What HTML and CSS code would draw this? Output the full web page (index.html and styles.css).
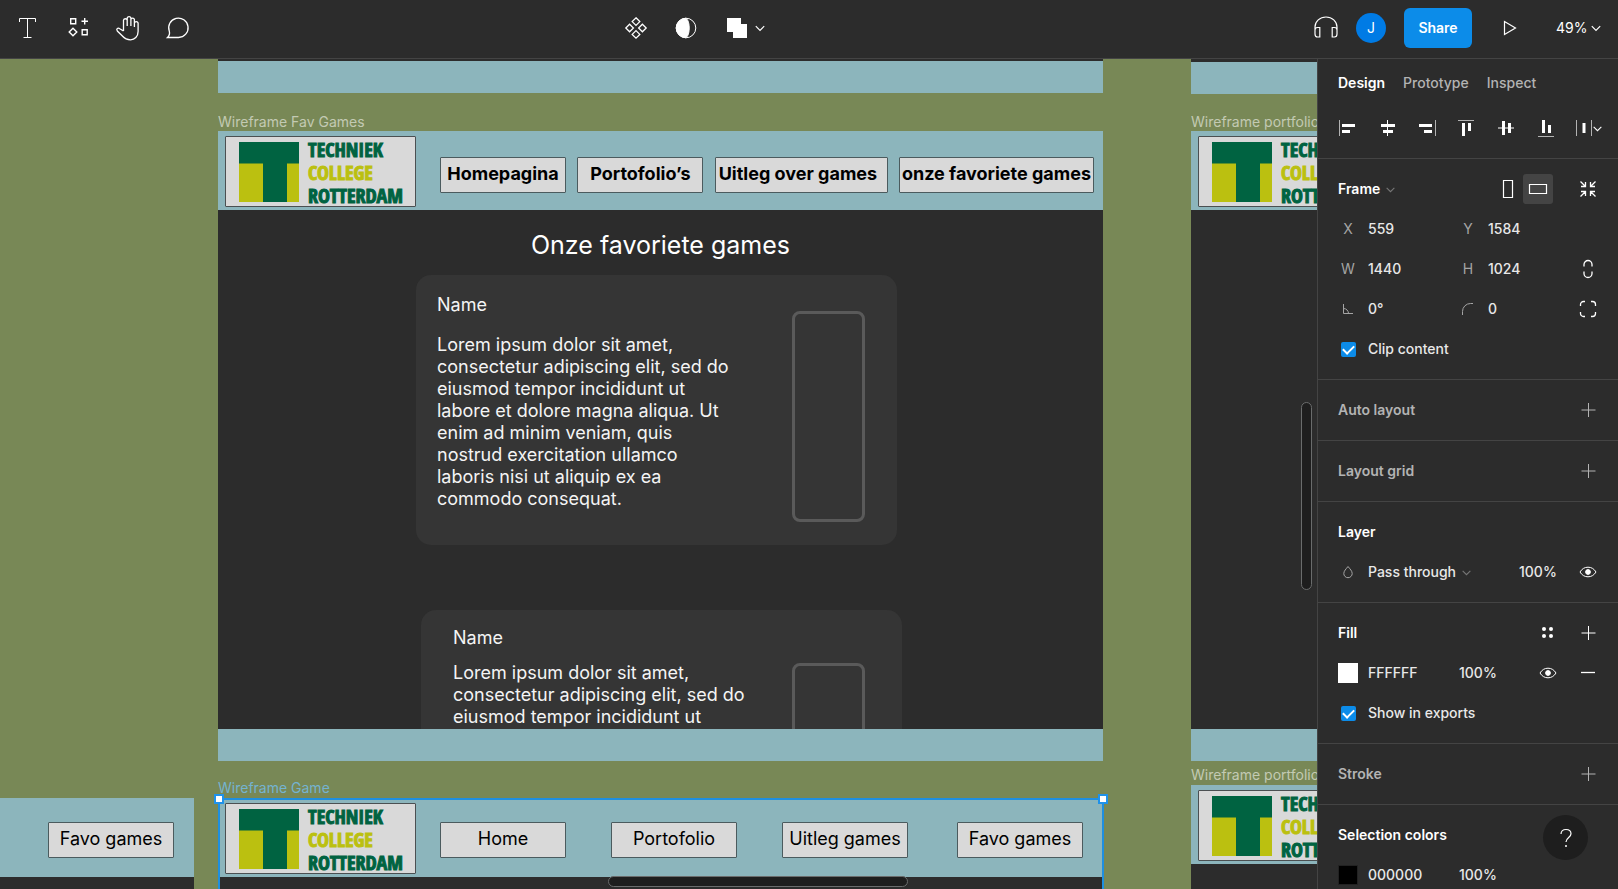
FILE: index.html
```html
<!DOCTYPE html>
<html lang="en">
<head>
<meta charset="utf-8">
<title>Wireframes</title>
<link rel="stylesheet" href="styles.css">
</head>
<body>
<svg class="defs" aria-hidden="true">
  <symbol id="chev" viewBox="0 0 10 10"><path d="M1.5 3.5 5 7l3.500-3.500"/></symbol>
  <symbol id="plus" viewBox="0 0 16 16"><path d="M8.500 1v14M1.500 8h14"/></symbol>
  <symbol id="eye" viewBox="0 0 18 12"><path d="M1 6C3 2.700 5.700 1.200 9 1.200S15 2.700 17 6c-2 3.300-4.700 4.800-8 4.800S3 9.300 1 6Z"/><circle class="solid" cx="9" cy="6" r="2.400"/></symbol>
  <symbol id="tcr" viewBox="0 0 60 60"><path fill="#bbc010" d="M0 21h60v39H0z"/><path fill="#006341" d="M0 0h60v21.500H48V60H24V21.500H0z"/></symbol>
</svg>
<header class="toolbar">
  <div class="tools">
    <button class="tool" aria-label="Text"><svg width="24" height="24"><path d="M3.500 6V2.500h16V6M11.500 2.500v19M7.500 21.500h8"/></svg></button>
    <button class="tool" aria-label="Resources"><svg width="24" height="24"><path stroke-width="1.400" d="M4.700 2.700h5v5h-5zM16.200 13.700h5v5h-5zM7 12.200l3.800 3.800L7 19.800 3.200 16zM18.700 2v6.500M15.500 5.200H22"/></svg></button>
    <button class="tool" aria-label="Hand"><svg width="26" height="28"><path stroke-width="1.300" d="M8.500 17V6.200a1.900 1.900 0 0 1 3.700 0V12M12.200 12V4a1.900 1.900 0 0 1 3.700 0v8M15.900 12V5.500a1.800 1.800 0 0 1 3.500 0V13M19.400 10V9a1.900 1.900 0 0 1 3.700 0v8.500c0 5-3.500 8.300-7.500 8.300-3.500 0-5.800-1-8.200-3.800L2.300 17c-1.500-2.200.7-3.700 2.500-2.300L8.500 17"/></svg></button>
    <button class="tool" aria-label="Comment"><svg width="26" height="26"><path stroke-width="1.300" d="M2.500 22.500h11a9.700 9.700 0 1 0-9.200-6.300c.6 2.300.2 4.500-1.800 6.300Z"/></svg></button>
  </div>
  <div class="tools">
    <button class="tool" aria-label="Create component"><svg width="24" height="24"><path stroke-width="1.300" d="m12 1.800 3.800 3.800L12 9.400 8.200 5.600zM12 14.600l3.800 3.800-3.800 3.800-3.800-3.800zM5.600 8.200 9.400 12l-3.800 3.800L1.800 12zM18.400 8.200l3.800 3.800-3.800 3.800-3.800-3.800z"/></svg></button>
    <button class="tool" aria-label="Use as mask"><svg width="24" height="24"><circle cx="12" cy="12" r="9.800"/><path class="solid" d="M12 2.200a9.800 9.800 0 0 0 0 19.600C14.800 19.500 15.200 15 15.200 12S14.800 4.500 12 2.200Z"/></svg></button>
    <button class="tool wide" aria-label="Boolean groups"><svg width="22" height="22"><path class="solid" stroke="none" d="M1 1h14v6h6v14H7v-6H1z"/></svg><svg width="12" height="12"><use href="#chev"/></svg></button>
  </div>
  <div class="account">
    <button class="plain" aria-label="Audio"><svg width="26" height="26"><path stroke-width="1.200" d="M2 15v-3a11 10 0 0 1 22 0v3M2 18v-3c0-2 1.200-2.500 2.500-2.500h2.300v9.500H4.500C3 22 2 21 2 19zM24 18v-3c0-2-1.200-2.500-2.500-2.500h-2.300v9.500h2.300c1.500 0 2.500-1 2.500-3z"/></svg></button>
    <button class="avatar">J</button>
    <button class="share">Share</button>
    <button class="plain play" aria-label="Present"><svg width="16" height="16"><path stroke-width="1.200" d="M2.500 1.500v13L13.500 8z"/></svg></button>
    <label class="drop zoom"><select aria-label="Zoom"><option>49%</option></select><svg width="12" height="12"><use href="#chev"/></svg></label>
  </div>
</header>
<div class="workspace">
  <main class="canvas">
    <section class="frame col-main top-sliver"></section>
    <section class="frame col-right top-sliver low"></section>

    <h2 class="label at-fav">Wireframe Fav Games</h2>
    <section class="frame col-main fav">
      <div class="band bold">
        <div class="logo"><svg width="60" height="60"><use href="#tcr"/></svg><p><span>TECHNIEK</span><span class="lime">COLLEGE</span><span>ROTTERDAM</span></p></div>
        <nav>
          <a class="box w-s" href="#home">Homepagina</a><a class="box w-s" href="#portfolio">Portofolio’s</a><a class="box w-m" href="#uitleg">Uitleg over games</a><a class="box w-l" href="#fav">onze favoriete games</a>
        </nav>
      </div>
      <h1>Onze favoriete games</h1>
      <article class="card">
        <div class="copy"><h3>Name</h3><p>Lorem ipsum dolor sit amet, consectetur adipiscing elit, sed do eiusmod tempor incididunt ut labore et dolore magna aliqua. Ut enim ad minim veniam, quis nostrud exercitation ullamco laboris nisi ut aliquip ex ea commodo consequat.</p></div>
        <div class="thumb"></div>
      </article>
      <article class="card second">
        <div class="copy"><h3>Name</h3><p>Lorem ipsum dolor sit amet, consectetur adipiscing elit, sed do eiusmod tempor incididunt ut</p></div>
        <div class="thumb"></div>
      </article>
      <div class="foot"></div>
    </section>

    <h2 class="label at-port">Wireframe portfolio</h2>
    <section class="frame col-right fav">
      <div class="band"><div class="logo"><svg width="60" height="60"><use href="#tcr"/></svg><p><span>TECHNIEK</span><span class="lime">COLLEGE</span><span>ROTTERDAM</span></p></div></div>
      <div class="foot"></div>
    </section>

    <h2 class="label at-port2">Wireframe portfolio</h2>
    <section class="frame col-right port2">
      <div class="band"><div class="logo"><svg width="60" height="60"><use href="#tcr"/></svg><p><span>TECHNIEK</span><span class="lime">COLLEGE</span><span>ROTTERDAM</span></p></div></div>
    </section>

    <section class="frame col-left game">
      <div class="band end"><nav><a class="box w-s" href="#fav">Favo games</a></nav></div>
    </section>

    <h2 class="label at-game">Wireframe Game</h2>
    <section class="frame col-main game">
      <div class="band">
        <div class="logo"><svg width="60" height="60"><use href="#tcr"/></svg><p><span>TECHNIEK</span><span class="lime">COLLEGE</span><span>ROTTERDAM</span></p></div>
        <nav class="spread">
          <a class="box w-s" href="#home">Home</a><a class="box w-s" href="#portfolio">Portofolio</a><a class="box w-s" href="#uitleg">Uitleg games</a><a class="box w-s" href="#fav">Favo games</a>
        </nav>
      </div>
    </section>
    <div class="selection"><i class="handle"></i><i class="handle right"></i></div>
    <div class="bar vertical"></div>
    <div class="bar horizontal"></div>
  </main>

  <aside class="panel">
    <div class="tabs"><button class="on">Design</button><button>Prototype</button><button>Inspect</button></div>
    <div class="align">
      <button aria-label="Align left"><svg width="20" height="20"><path class="dim" d="M2.500 2v16"/><path stroke-width="3" d="M5 7.500h13M5 13.500h8"/></svg></button>
      <button aria-label="Align horizontal centers"><svg width="20" height="20"><path stroke-width="1" d="M10.500 2v16"/><path stroke-width="3" d="M4 7.500h14M6 13.500h10"/></svg></button>
      <button aria-label="Align right"><svg width="20" height="20"><path class="dim" d="M18.500 2v16"/><path stroke-width="3" d="M2 7.500h13M7 13.500h8"/></svg></button>
      <button aria-label="Align top"><svg width="20" height="20"><path class="dim" d="M2 2.500h16"/><path stroke-width="3" d="M7.500 5v13M13.500 5v8"/></svg></button>
      <button aria-label="Align vertical centers"><svg width="20" height="20"><path stroke-width="1" d="M2 10h16"/><path stroke-width="3" d="M7.500 3v14M13.500 5v10"/></svg></button>
      <button aria-label="Align bottom"><svg width="20" height="20"><path class="dim" d="M2 18.500h16"/><path stroke-width="3" d="M7.500 2v13M13.500 7v8"/></svg></button>
      <button aria-label="Tidy up"><svg width="16" height="20"><path class="dim" d="M.5 2v16M15.500 2v16"/><path stroke-width="3" d="M8 5v10"/></svg><svg width="11" height="11"><use href="#chev"/></svg></button>
    </div>
    <section>
      <div class="line">
        <label class="drop head"><select aria-label="Frame preset"><option>Frame</option></select><svg class="dim" width="11" height="11"><use href="#chev"/></svg></label>
        <div class="acts">
          <div class="pair"><button class="act" aria-label="Portrait"><svg width="12" height="20"><path stroke-width="1.200" d="M1.500 1.500h9v17h-9z"/></svg></button><button class="act on" aria-label="Landscape"><svg width="20" height="12"><path stroke-width="1.200" d="M1.500 1.500h17v9h-17z"/></svg></button></div>
          <button class="act" aria-label="Resize to fit"><svg width="18" height="18"><path stroke-width="1.300" d="M1.500 1.500 6 6M2 6.500h4.500V2M16.500 1.500 12 6M16 6.500h-4.500V2M1.500 16.500 6 12M2 11.500h4.500V16M16.500 16.500 12 12M16 11.500h-4.500V16"/></svg></button>
        </div>
      </div>
      <div class="fields"><label for="fx">X</label><input id="fx" value="559"><label for="fy">Y</label><input id="fy" value="1584"></div>
      <div class="fields"><label for="fw">W</label><input id="fw" value="1440"><label for="fh">H</label><input id="fh" value="1024"><button class="act" aria-label="Constrain proportions"><svg width="12" height="20"><path stroke-width="1.300" d="M2 7.500V5.500a4 4 0 0 1 8 0v2M2 12.500v2a4 4 0 0 0 8 0v-2"/></svg></button></div>
      <div class="fields"><label for="fr" aria-label="Rotation"><svg class="grey" width="12" height="12"><path d="M1.500 1v9.500H11M1.500 5.500a5 5 0 0 1 5 5"/></svg></label><input id="fr" value="0°"><label for="fc" aria-label="Corner radius"><svg class="grey" width="14" height="14"><path d="M1.500 13V9.500a8 8 0 0 1 8-8H12"/></svg></label><input id="fc" value="0"><button class="act" aria-label="Independent corners"><svg width="18" height="18"><path stroke-width="1.300" d="M1.500 6V4.500a3 3 0 0 1 3-3H6M12 1.500h1.500a3 3 0 0 1 3 3V6M16.500 12v1.500a3 3 0 0 1-3 3H12M6 16.500H4.500a3 3 0 0 1-3-3V12"/></svg></button></div>
      <label class="check"><input type="checkbox" checked>Clip content</label>
    </section>
    <section><div class="line"><h4 class="off">Auto layout</h4><button class="act off" aria-label="Add auto layout"><svg width="16" height="16"><use href="#plus"/></svg></button></div></section>
    <section><div class="line"><h4 class="off">Layout grid</h4><button class="act off" aria-label="Add layout grid"><svg width="16" height="16"><use href="#plus"/></svg></button></div></section>
    <section>
      <div class="line"><h4>Layer</h4></div>
      <div class="paint layer"><svg class="grey drip" width="12" height="14"><path d="M6 1.500C4 4 1.800 6 1.800 8.500a4.200 4.200 0 0 0 8.400 0C10.200 6 8 4 6 1.500Z"/></svg><span class="drop"><select aria-label="Blend mode"><option>Pass through</option></select><svg class="dim" width="11" height="11"><use href="#chev"/></svg></span><input class="pct" aria-label="Layer opacity" value="100%"><button class="act" aria-label="Toggle visibility"><svg width="18" height="12"><use href="#eye"/></svg></button></div>
    </section>
    <section>
      <div class="line"><h4>Fill</h4><div class="acts"><button class="act" aria-label="Styles"><svg width="14" height="14"><g class="solid" stroke="none"><circle cx="3" cy="3" r="2"/><circle cx="10" cy="3" r="2"/><circle cx="3" cy="10" r="2"/><circle cx="10" cy="10" r="2"/></g></svg></button><button class="act" aria-label="Add fill"><svg width="16" height="16"><use href="#plus"/></svg></button></div></div>
      <div class="paint"><button class="swatch white" aria-label="Fill color"></button><input class="hex" aria-label="Fill hex" value="FFFFFF"><input class="pct" aria-label="Fill opacity" value="100%"><div class="acts"><button class="act" aria-label="Toggle fill"><svg width="18" height="12"><use href="#eye"/></svg></button><button class="act" aria-label="Remove fill"><svg width="16" height="16"><path stroke-width="1.300" d="M1 7.500h14"/></svg></button></div></div>
      <label class="check"><input type="checkbox" checked>Show in exports</label>
    </section>
    <section><div class="line"><h4 class="off">Stroke</h4><button class="act off" aria-label="Add stroke"><svg width="16" height="16"><use href="#plus"/></svg></button></div></section>
    <section>
      <div class="line"><h4>Selection colors</h4></div>
      <div class="paint"><button class="swatch black" aria-label="Selection color"></button><input class="hex" aria-label="Selection hex" value="000000"><input class="pct" aria-label="Selection opacity" value="100%"></div>
    </section>
    <button class="help" aria-label="Help"><svg width="14" height="20"><path stroke-width="1.200" d="M2 6c0-3 2-4.500 5-4.500s5 1.700 5 4.200c0 3.800-5 3.800-5 8.300"/><circle class="solid" stroke="none" cx="7" cy="18" r="1"/></svg></button>
  </aside>
</div>
</body>
</html>
```

FILE: styles.css
```css
* { box-sizing: border-box; }
body { margin: 0; height: 100vh; display: flex; flex-direction: column; overflow: hidden; background: #2c2c2c; color: #fff; font: 14px/20px Inter, sans-serif; }
h1, h2, h3, h4, p { margin: 0; font-size: 14px; font-weight: 400; }
button, input, select { font: inherit; color: inherit; background: none; border: 0; padding: 0; margin: 0; }
select { appearance: none; }
svg { fill: none; stroke: currentColor; flex: none; display: block; }
.solid { fill: currentColor; }
.defs { position: absolute; width: 0; height: 0; }

/* Toolbar */
.toolbar { display: flex; flex: none; height: 59px; align-items: center; border-bottom: 1px solid #444; padding-bottom: 2px; }
.tools { display: flex; padding-left: 3px; }
.tools:first-child { width: 37.6%; }
.tool { width: 50px; height: 50px; display: flex; align-items: center; justify-content: center; }
.tool.wide { width: 70px; gap: 6px; }
.account { margin-left: auto; display: flex; align-items: center; padding-right: 16px; }
.plain { display: flex; }
.avatar { width: 30px; height: 30px; border-radius: 50%; background: #007be5; margin: 0 18px 0 17px; }
.share { width: 68px; height: 40px; border-radius: 6px; background: #0c8ce9; font-weight: 600; }
.play { margin: 0 38px 0 30px; }
.drop { display: flex; align-items: center; gap: 4px; }
.drop.zoom { gap: 2px; }

.workspace { flex: 1; display: flex; min-height: 0; }

/* Canvas: frames are placed freely */
.canvas { flex: 1; position: relative; overflow: hidden; background: #788856; }
.frame { position: absolute; overflow: hidden; background: #2c2c2c; display: flex; flex-direction: column; }
.col-main { left: 218px; width: 885px; }
.col-right { left: 1191px; width: 885px; }
.col-left { left: -691px; width: 885px; }
.top-sliver { top: 0; height: 34px; border-top: 2px solid #2c2c2c; background: #8cb5bc; }
.top-sliver.low { height: 35px; border-top-width: 3px; }
.fav { top: 72px; height: 630px; }
.game { top: 739px; height: 629px; }
.port2 { top: 726px; height: 629px; }
.label { position: absolute; color: #c3cab3; line-height: 18px; white-space: nowrap; }
.at-fav { left: 218px; top: 54px; }
.at-port { left: 1191px; top: 54px; }
.at-port2 { left: 1191px; top: 707px; }
.at-game { left: 218px; top: 720px; color: #74b3d0; }
.selection { position: absolute; left: 218px; top: 739px; width: 886px; height: 640px; border: 2px solid #1f8fe0; }
.handle { position: absolute; left: -6px; top: -6px; width: 10px; height: 10px; background: #fff; border: 2px solid #1f92ea; }
.handle.right { left: auto; right: -6px; }
.bar { position: absolute; background: #1e1e1e; border: 1px solid #6a6c6c; border-radius: 6px; }
.vertical { right: 5px; top: 343px; width: 11px; height: 188px; }
.horizontal { left: 608px; top: 817px; width: 300px; height: 11px; }

/* Wireframe content */
.band { flex: none; height: 79px; background: #8cb5bc; display: flex; align-items: flex-start; padding: 5px 9px 0 7px; }
.logo { flex: none; width: 191px; height: 71px; border: 1px solid #4b5052; border-radius: 1px; background: #d9d9d9; padding: 5px 0 0 13px; display: flex; gap: 9px; }
.logo svg { stroke: none; }
.logo p { font: 700 20px/23px "Liberation Sans Narrow", "Open Sans Condensed", "DejaVu Sans Condensed", sans-serif; color: #006341; -webkit-text-stroke: 1px currentColor; }
.logo span { display: block; margin-top: -4px; margin-bottom: 4px; }
.logo .lime { color: #bbc010; }
.band nav { flex: 1; display: flex; justify-content: space-between; padding: 21px 0 0 24px; }
.band nav.spread { justify-content: flex-start; gap: 45px; padding: 19px 11px 0 24px; }
.spread .box:last-child { margin-left: auto; }
.band.end nav { justify-content: flex-end; padding: 19px 11px 0 24px; }
.box { height: 36px; border: 1px solid #4b5b5e; border-radius: 1px; background: #d9d9d9; color: #000; text-decoration: none; font-size: 18px; line-height: 32px; white-space: nowrap; display: flex; justify-content: center; }
.bold .box { font-weight: 700; }
.w-s { width: 126px; }
.w-m { width: 173px; }
.box.w-m { justify-content: flex-start; padding-left: 3px; }
.w-l { width: 195px; }
.frame h1 { text-align: center; font-size: 25px; line-height: 30px; margin: 20px 0 15px; }
.card { flex: none; width: 481px; height: 270px; margin-left: 198px; border-radius: 15px; background: #353535; display: flex; justify-content: space-between; padding: 18px 32px 0 21px; color: #f4f4f4; }
.copy { width: 299px; }
.card h3 { margin-bottom: 18px; }
.card h3, .card p { font-size: 18px; line-height: 22px; }
.copy { padding-top: 1px; }
.thumb { width: 73px; height: 211px; margin-top: 18px; border: 3px solid #5a5a5a; border-radius: 8px; }
.second { margin: 65px 0 0 203px; padding: 16px 37px 0 32px; }
.card.second h3 { margin-bottom: 13px; }
.second .thumb { margin-top: 37px; }
.foot { position: absolute; left: 0; right: 0; bottom: 0; height: 32px; background: #8cb5bc; }

/* Design panel */
.panel { flex: none; width: 301px; border-left: 1px solid #444; position: relative; overflow: hidden; font-weight: 500; color: #e8e8e8; }
.tabs { height: 49px; display: flex; align-items: center; gap: 18px; padding: 0 0 2px 20px; }
.tabs button { color: #b3b3b3; font-weight: 500; }
.tabs .on { color: #fff; font-weight: 600; }
.align { height: 51px; padding: 0 15px 10px 19px; display: flex; align-items: center; justify-content: space-between; border-bottom: 1px solid #444; color: #fff; }
.align .dim { stroke: #b3b3b3; stroke-width: 1; }
.align button { display: flex; align-items: center; }
.panel section { padding: 10px 15px 10px 20px; border-bottom: 1px solid #444; }
.line, .paint, .fields, .check { height: 40px; display: flex; align-items: center; }
.line { justify-content: space-between; }
.line h4 { font-weight: 600; color: #fff; }
.line .off, .off { color: #b3b3b3; }
.head { font-weight: 600; color: #fff; }
.drop .dim { color: #777; }
.acts { display: flex; gap: 10px; margin-left: auto; }
.pair { display: flex; margin-right: 10px; }
.act { width: 30px; height: 30px; border-radius: 3px; display: flex; align-items: center; justify-content: center; color: #fff; }
.act.on { background: #444; }
.act.off { color: #b3b3b3; }
.fields { display: grid; grid-template-columns: 20px 80px 20px 1fr 30px; column-gap: 10px; }
.fields label { color: #a5a5a5; display: flex; justify-content: center; font-weight: 400; }
.fields input { width: 100%; min-width: 0; }
.grey { color: #a5a5a5; }
.check { gap: 12px; padding-left: 3px; }
.check input { appearance: none; width: 15px; height: 15px; border-radius: 2px; background: #0c8ce9; display: flex; justify-content: center; }
.check input::before { content: ""; width: 5px; height: 9px; margin-top: 1px; border: solid #fff; border-width: 0 2px 2px 0; transform: rotate(45deg); }
.paint { gap: 10px; }
.swatch { width: 20px; height: 20px; flex: none; }
.white { background: #fff; }
.black { background: #000; border: 1px solid #222; }
.hex { width: 81px; }
.pct { width: 44px; }
.drip { margin: 0 4px; }
.layer { gap: 10px; }
.layer .pct { margin-left: auto; }
.help { position: absolute; right: 30px; bottom: 29px; width: 45px; height: 45px; border-radius: 50%; background: #1e1e1e; display: flex; align-items: center; justify-content: center; color: #fff; }
```
